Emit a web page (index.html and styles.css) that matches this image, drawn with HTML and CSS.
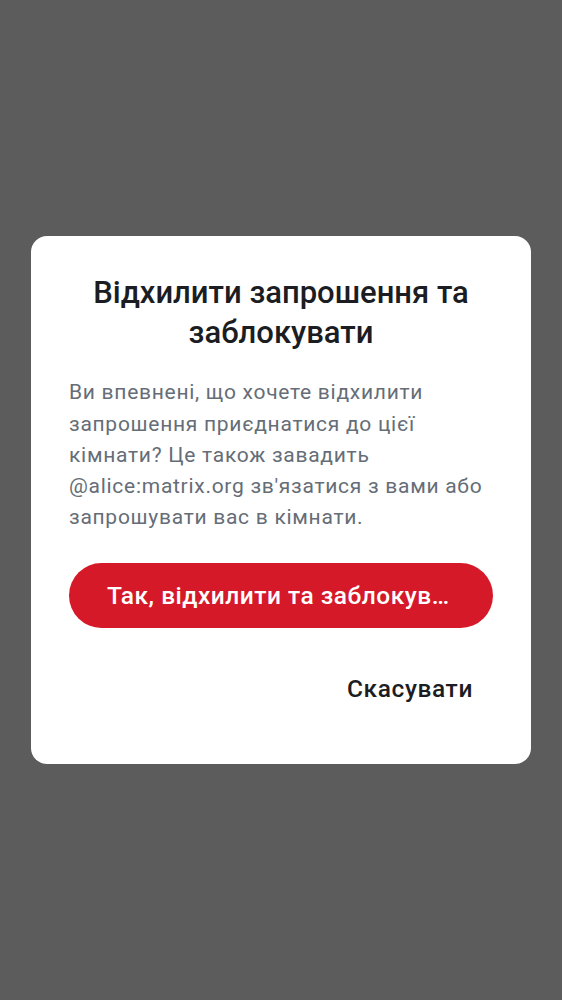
FILE: index.html
```html
<!DOCTYPE html>
<html lang="uk">
<head>
<meta charset="utf-8">
<link rel="stylesheet" href="styles.css">
</head>
<body>
<div class="screen">
  <div class="dialog">
    <h1 class="title">Відхилити запрошення та заблокувати</h1>
    <p class="text">Ви впевнені, що хочете відхилити запрошення приєднатися до цієї кімнати? Це також завадить @alice:matrix.org зв'язатися з вами або запрошувати вас в кімнати.</p>
    <button class="btn-danger"><span>Так, відхилити та заблокувати</span></button>
    <div class="actions">
      <button class="btn-text">Скасувати</button>
    </div>
  </div>
</div>
</body>
</html>
```
FILE: styles.css
```css
html, body {
  margin: 0;
  padding: 0;
}
body {
  background: #5c5c5c;
  font-family: Roboto, "Noto Sans", sans-serif;
}
.screen {
  height: 1000px;
  display: flex;
  align-items: center;
  justify-content: center;
}
.dialog {
  width: 500px;
  box-sizing: border-box;
  background: #ffffff;
  border-radius: 16px;
  padding: 37px 38px 43px;
  display: flex;
  flex-direction: column;
}
.title {
  margin: 0;
  font-size: 31px;
  line-height: 40px;
  font-weight: 500;
  color: #1b1d22;
  text-align: center;
}
.text {
  margin: 24px 0 0;
  font-size: 21px;
  line-height: 31.25px;
  font-weight: 400;
  color: #656d77;
  letter-spacing: 0.72px;
}
.btn-danger {
  margin-top: 29px;
  height: 65px;
  border: none;
  border-radius: 33px;
  background: #d51928;
  color: #ffffff;
  font-family: Roboto, "Noto Sans", sans-serif;
  font-size: 24.5px;
  font-weight: 500;
  letter-spacing: 0.5px;
  padding: 0 38px;
  display: flex;
  align-items: center;
  justify-content: center;
}
.btn-danger span {
  white-space: nowrap;
  overflow: hidden;
  text-overflow: ellipsis;
}
.actions {
  display: flex;
  justify-content: flex-end;
  margin-top: 29px;
}
.btn-text {
  border: none;
  background: none;
  font-family: Roboto, "Noto Sans", sans-serif;
  font-size: 24.5px;
  font-weight: 500;
  color: #1b1d22;
  letter-spacing: 0.6px;
  padding: 12px 20px;
  line-height: 40px;
}
```
